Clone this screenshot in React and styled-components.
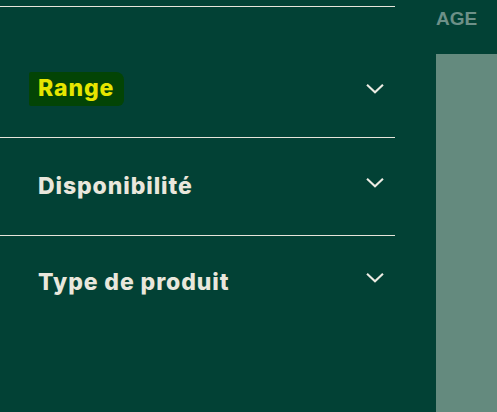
import React from 'react';
import styled, { createGlobalStyle } from 'styled-components';

const GlobalStyle = createGlobalStyle`
  html, body {
    margin: 0;
    padding: 0;
    background: #024135;
  }
  body {
    font-family: Inter, "Open Sans", sans-serif;
  }
`;

const Page = styled.div`
  display: flex;
  width: 497px;
  height: 412px;
  overflow: hidden;
  background: #024135;
`;

const Sidebar = styled.aside`
  width: 395px;
  flex-shrink: 0;
  padding-top: 6px;
`;

const FilterRow = styled.div`
  border-top: 1px solid #e6e4da;
  height: ${props => props.$height}px;
  padding-top: ${props => props.$top}px;
  box-sizing: border-box;
  display: flex;
  align-items: flex-start;
  justify-content: space-between;
  padding-left: 38px;
  padding-right: 11px;
`;

const Label = styled.span`
  font-size: 23px;
  font-weight: 800;
  color: #e9e7dc;
  letter-spacing: 0.9px;
  line-height: 28px;
`;

const Marked = styled.span`
  color: #e6e600;
  background: #034405;
  margin-left: -9px;
  padding: 2px 10px 4px 9px;
  border-radius: 2px 8px 6px 2px;
`;

const Chevron = styled.svg`
  width: 18px;
  height: 10px;
  margin-top: ${props => props.$offset}px;
  flex-shrink: 0;
`;

const Content = styled.div`
  flex: 1;
  display: flex;
  flex-direction: column;
  padding-left: 41px;
`;

const TopBar = styled.div`
  height: 54px;
  overflow: hidden;
  font-family: "Liberation Sans", Arial, sans-serif;
  font-weight: 700;
  font-size: 19px;
  color: #6d9088;
  padding-top: 8px;
  box-sizing: border-box;
`;

const Visual = styled.div`
  flex: 1;
  background: #648a7e;
`;

function Arrow({ offset }) {
  return (
    <Chevron $offset={offset} viewBox="0 0 18 10" fill="none">
      <path d="M1.8 1.5 L9 8.3 L16.2 1.5" stroke="#ecebe3" strokeWidth="2.1" strokeLinecap="square" />
    </Chevron>
  );
}

export default function App() {
  return (
    <>
      <GlobalStyle />
      <Page>
        <Sidebar>
          <FilterRow $height={131} $top={67}>
            <Label><Marked>Range</Marked></Label>
            <Arrow offset={10} />
          </FilterRow>
          <FilterRow $height={98} $top={34}>
            <Label>Disponibilité</Label>
            <Arrow offset={6} />
          </FilterRow>
          <FilterRow $height={183} $top={32}>
            <Label>Type de produit</Label>
            <Arrow offset={5} />
          </FilterRow>
        </Sidebar>
        <Content>
          <TopBar>AGE</TopBar>
          <Visual />
        </Content>
      </Page>
    </>
  );
}
